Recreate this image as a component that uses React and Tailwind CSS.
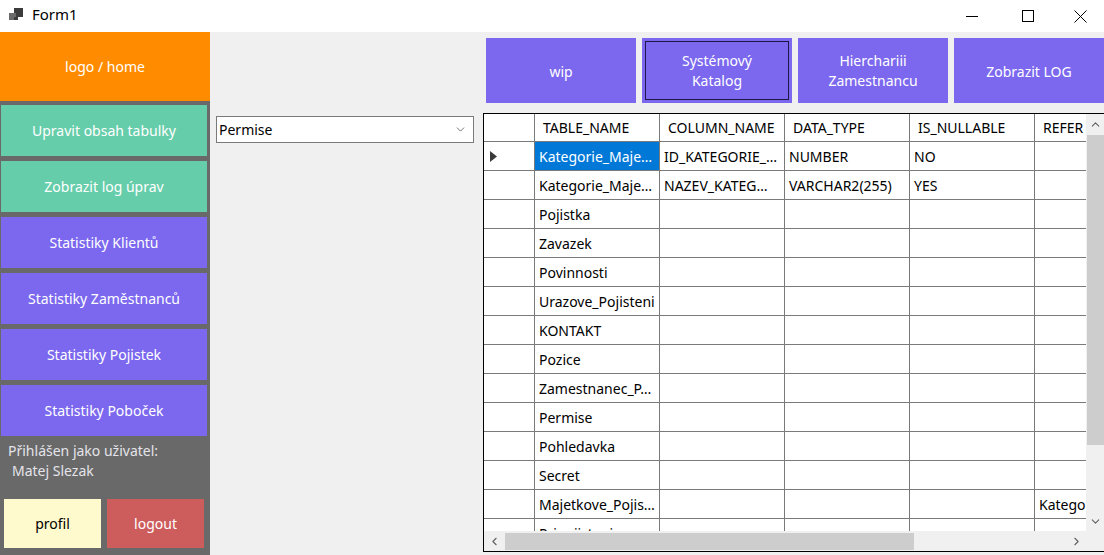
import { ChevronDown, ChevronUp, ChevronLeft, ChevronRight } from "lucide-react";

const FONT = { fontFamily: '"Noto Sans", "Open Sans", sans-serif' };

const sideButtons = [
  { label: "Upravit obsah tabulky", color: "bg-[#66cdaa]" },
  { label: "Zobrazit log úprav", color: "bg-[#66cdaa]" },
  { label: "Statistiky Klientů", color: "bg-[#7b68ee]" },
  { label: "Statistiky Zaměstnanců", color: "bg-[#7b68ee]" },
  { label: "Statistiky Pojistek", color: "bg-[#7b68ee]" },
  { label: "Statistiky Poboček", color: "bg-[#7b68ee]" },
];

const columns = ["TABLE_NAME", "COLUMN_NAME", "DATA_TYPE", "IS_NULLABLE", "REFER"];

const rows = [
  ["Kategorie_Maje…", "ID_KATEGORIE_…", "NUMBER", "NO", ""],
  ["Kategorie_Maje…", "NAZEV_KATEG…", "VARCHAR2(255)", "YES", ""],
  ["Pojistka", "", "", "", ""],
  ["Zavazek", "", "", "", ""],
  ["Povinnosti", "", "", "", ""],
  ["Urazove_Pojisteni", "", "", "", ""],
  ["KONTAKT", "", "", "", ""],
  ["Pozice", "", "", "", ""],
  ["Zamestnanec_P…", "", "", "", ""],
  ["Permise", "", "", "", ""],
  ["Pohledavka", "", "", "", ""],
  ["Secret", "", "", "", ""],
  ["Majetkove_Pojis…", "", "", "", "Katego"],
  ["Pripojisteni", "", "", "", ""],
];

function TitleBar() {
  return (
    <div className="h-[32px] bg-white flex items-center shrink-0">
      <svg width="16" height="16" viewBox="0 0 16 16" className="ml-[8px] mb-[3px]">
        <rect x="6" y="1" width="9" height="9" fill="#3c3c3c" />
        <rect x="1" y="6" width="7" height="7" fill="#6a6a6a" />
        <rect x="6" y="10" width="4" height="3" fill="#3c3c3c" />
      </svg>
      <span className="ml-[8px] text-[15px] text-black mb-[3px]">Form1</span>
      <div className="ml-auto flex h-full">
        <div className="w-[56px] flex items-center justify-center">
          <svg width="12" height="12" viewBox="0 0 12 12">
            <line x1="0" y1="6.5" x2="12" y2="6.5" stroke="#000" strokeWidth="1" />
          </svg>
        </div>
        <div className="w-[56px] flex items-center justify-center">
          <svg width="12" height="12" viewBox="0 0 12 12">
            <rect x="0.5" y="0.5" width="11" height="11" fill="none" stroke="#000" strokeWidth="1" />
          </svg>
        </div>
        <div className="w-[48px] flex items-center justify-center">
          <svg width="13" height="13" viewBox="0 0 13 13">
            <path d="M0.5 0.5 L12.5 12.5 M12.5 0.5 L0.5 12.5" stroke="#000" strokeWidth="1" />
          </svg>
        </div>
      </div>
    </div>
  );
}

function Sidebar() {
  return (
    <div className="w-[210px] shrink-0 bg-[#696969] flex flex-col">
      <div className="h-[69px] bg-[#ff8c00] flex items-center justify-center text-white text-[14px]">
        logo / home
      </div>
      <div className="flex flex-col gap-[5px] pt-[4px] pl-[1px] pr-[3px]">
        {sideButtons.map((b) => (
          <div
            key={b.label}
            className={`${b.color} h-[51px] flex items-center justify-center text-white text-[14px]`}
          >
            {b.label}
          </div>
        ))}
      </div>
      <div className="pt-[5px] pl-[8px] text-[14px] text-[#e4e4ea] leading-[20px]">
        <div>Přihlášen jako uživatel:</div>
        <div className="pl-[4px]">Matej Slezak</div>
      </div>
      <div className="flex gap-[6px] pl-[4px] mt-[18px]">
        <div className="w-[97px] h-[49px] bg-[#fffacd] flex items-center justify-center text-black text-[14px]">
          profil
        </div>
        <div className="w-[97px] h-[49px] bg-[#cd5c5c] flex items-center justify-center text-white text-[14px]">
          logout
        </div>
      </div>
    </div>
  );
}

function TopButtons() {
  return (
    <div className="flex gap-[6px] pl-[3px] pt-[6px] h-[71px]">
      <div className="w-[150px] h-[65px] shrink-0 bg-[#7b68ee] text-white text-[14px] flex items-center justify-center pt-[1px]">
        wip
      </div>
      <div className="w-[150px] h-[65px] shrink-0 bg-[#7b68ee] p-[3px]">
        <div className="w-full h-full border border-[#1c1848] text-white text-[14px] flex flex-col items-center justify-center leading-[20px] pt-[1px]">
          <span>Systémový</span>
          <span>Katalog</span>
        </div>
      </div>
      <div className="w-[150px] h-[65px] shrink-0 bg-[#7b68ee] text-white text-[14px] flex flex-col items-center justify-center leading-[20px] pt-[1px]">
        <span>Hierchariii</span>
        <span>Zamestnancu</span>
      </div>
      <div className="w-[150px] h-[65px] shrink-0 bg-[#7b68ee] text-white text-[14px] flex items-center justify-center pt-[1px]">
        Zobrazit LOG
      </div>
    </div>
  );
}

function DataGrid() {
  return (
    <div className="mt-[10px] w-[621px] h-[439px] border-l border-t border-b border-black bg-[#f0f0f0] flex flex-col text-[14px] text-black">
      <div className="flex flex-1 min-h-0">
        <div className="w-[602px] shrink-0 overflow-hidden bg-white">
          <div className="flex h-[28px] border-b border-[#7a7a7a] w-max">
            <div className="w-[51px] border-r border-[#7a7a7a] shrink-0" />
            {columns.map((c) => (
              <div
                key={c}
                className="w-[125px] border-r border-[#7a7a7a] shrink-0 pl-[8px] flex items-center whitespace-nowrap overflow-hidden"
              >
                {c}
              </div>
            ))}
          </div>
          {rows.map((r, i) => (
            <div key={i} className="flex h-[29px] border-b border-[#7a7a7a] w-max">
              <div className="w-[51px] border-r border-[#7a7a7a] shrink-0 flex items-center pl-[6px]">
                {i === 0 && (
                  <svg width="7" height="11" viewBox="0 0 7 11">
                    <path d="M0 0 L7 5.5 L0 11 Z" fill="#3a3a3a" />
                  </svg>
                )}
              </div>
              {r.map((cell, j) => (
                <div
                  key={j}
                  className={`w-[125px] border-r border-[#7a7a7a] shrink-0 pl-[4px] flex items-center whitespace-nowrap overflow-hidden ${
                    i === 0 && j === 0 ? "bg-[#0078d7] text-white" : ""
                  }`}
                >
                  {cell}
                </div>
              ))}
            </div>
          ))}
        </div>
        <div className="w-[18px] shrink-0 bg-[#f0f0f0] flex flex-col items-start">
          <div className="h-[21px] w-[18px] flex items-center justify-center">
            <ChevronUp size={13} strokeWidth={2} color="#606060" />
          </div>
          <div className="w-[17px] ml-[1px] h-[310px] bg-[#cdcdcd]" />
          <div className="flex-1" />
          <div className="h-[20px] w-[18px] flex items-center justify-center">
            <ChevronDown size={13} strokeWidth={2} color="#606060" />
          </div>
        </div>
      </div>
      <div className="h-[20px] flex items-center bg-[#f0f0f0]">
        <div className="w-[21px] shrink-0 flex items-center justify-center">
          <ChevronLeft size={13} strokeWidth={2} color="#606060" />
        </div>
        <div className="w-[409px] shrink-0 h-[17px] bg-[#cdcdcd]" />
        <div className="w-[153px] shrink-0" />
        <div className="w-[18px] shrink-0 flex items-center justify-center">
          <ChevronRight size={13} strokeWidth={2} color="#606060" />
        </div>
      </div>
    </div>
  );
}

export default function App() {
  return (
    <div className="w-[1104px] h-[555px] overflow-hidden flex flex-col bg-[#f0f0f0]" style={FONT}>
      <TitleBar />
      <div className="flex flex-1 min-h-0">
        <Sidebar />
        <div className="w-[273px] shrink-0 pl-[6px] pt-[84px]">
          <div className="w-[258px] h-[27px] bg-white border border-[#7a7a7a] flex items-center pl-[2px] pr-[6px] text-[14px] text-black">
            <span>Permise</span>
            <ChevronDown size={13} strokeWidth={1.5} color="#555" className="ml-auto" />
          </div>
        </div>
        <div className="flex flex-col shrink-0">
          <TopButtons />
          <DataGrid />
        </div>
      </div>
    </div>
  );
}
